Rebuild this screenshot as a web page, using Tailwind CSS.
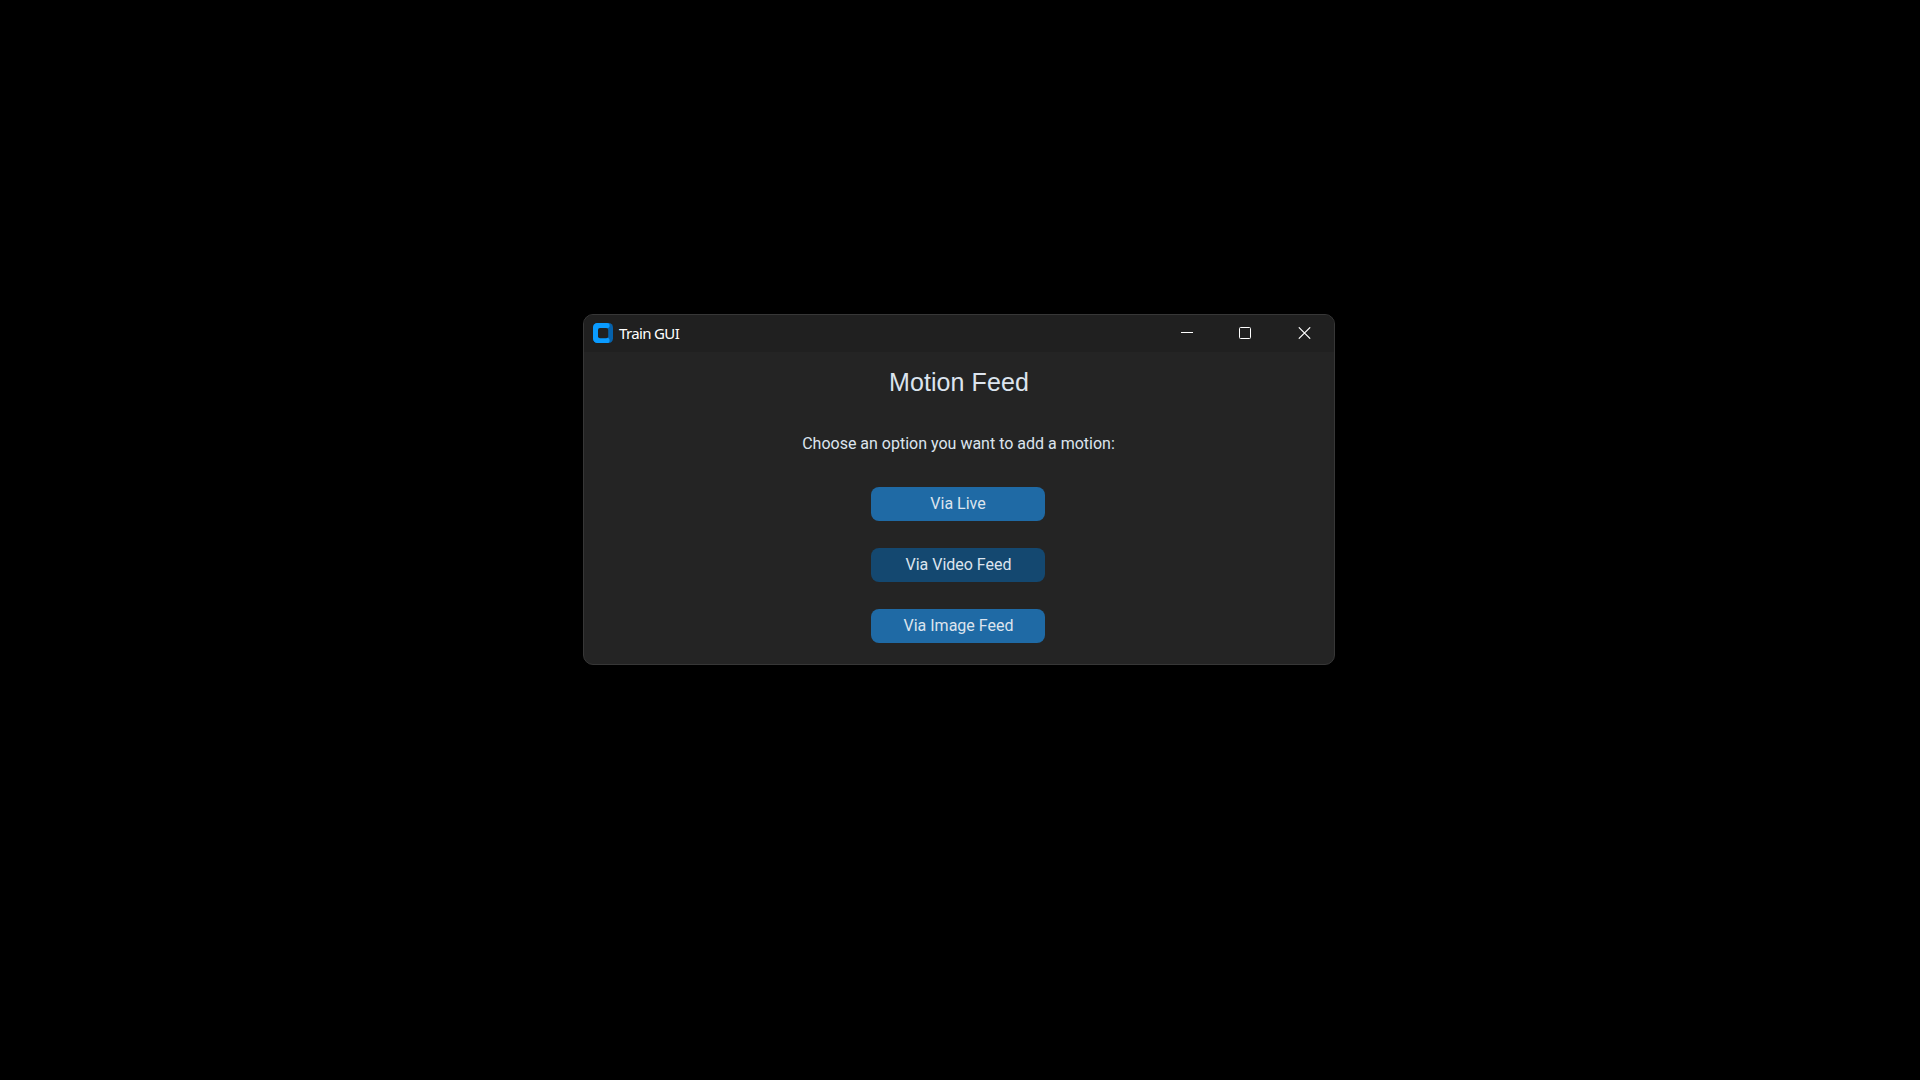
<!DOCTYPE html>
<html lang="en">
<head>
<meta charset="utf-8">
<title>Train GUI</title>
<script src="https://cdn.jsdelivr.net/npm/@tailwindcss/browser@4"></script>
</head>
<body class="bg-black h-screen overflow-hidden flex justify-center pt-[314px] pr-[2px]">
<main class="w-[752px] h-[351px] rounded-[10px] border border-[#373737] bg-[#242424] overflow-hidden flex flex-col">
  <header class="h-[37px] shrink-0 bg-[#202020] flex items-center pl-[9px] pr-[23px] pb-px">
    <svg class="size-5" viewBox="0 0 20 20">
      <rect width="20" height="20" rx="4.500" fill="#0562ac"/>
      <path d="M4.500 0H14a2.600 2.600 0 0 1 2.600 2.600A2.600 2.600 0 0 1 14 5.200V14.800a2.600 2.600 0 0 1 2.600 2.600A2.600 2.600 0 0 1 14 20H4.500A4.500 4.500 0 0 1 0 15.500v-11A4.500 4.500 0 0 1 4.500 0z" fill="#0a9bff"/>
      <rect x="5" y="5" width="10.200" height="10.200" rx="2" fill="#202020"/>
    </svg>
    <h1 class="ml-[6px] flex-1 text-[15px] leading-5 tracking-[-0.65px] text-white font-['Noto_Sans',sans-serif]">Train GUI</h1>
    <div class="flex items-center gap-[46px]">
      <svg class="w-3 h-3" viewBox="0 0 12 12"><path d="M0 5.500h12" stroke="#fff"/></svg>
      <svg class="w-3 h-3" viewBox="0 0 12 12"><rect x=".5" y=".5" width="11" height="11" rx="1" fill="none" stroke="#fff"/></svg>
      <svg class="w-[13px] h-3 ml-px" viewBox="0 0 13 12"><path d="M.8.300l11.400 11.400M12.200.300L.8 11.700" stroke="#fff" stroke-width="1.100"/></svg>
    </div>
  </header>
  <section class="flex flex-col items-center pt-[15px] pr-[2px] text-[#dce4ee] font-[Roboto,sans-serif] text-[16px]">
    <h2 class="h-[30px] leading-[30px] text-[25px] tracking-[0.080px] pl-[2px] font-['Liberation_Sans',sans-serif]">Motion Feed</h2>
    <p class="mt-[37px] h-[20px] leading-[20px] pl-px">Choose an option you want to add a motion:</p>
    <div class="mt-[33px] flex flex-col gap-[27px]">
      <button class="w-[174px] h-[34px] rounded-[8px] bg-[#1f6aa5] leading-[34px]">Via Live</button>
      <button class="w-[174px] h-[34px] rounded-[8px] bg-[#144870] leading-[34px] pl-px">Via Video Feed</button>
      <button class="w-[174px] h-[34px] rounded-[8px] bg-[#1f6aa5] leading-[34px] pl-px">Via Image Feed</button>
    </div>
  </section>
</main>
</body>
</html>
